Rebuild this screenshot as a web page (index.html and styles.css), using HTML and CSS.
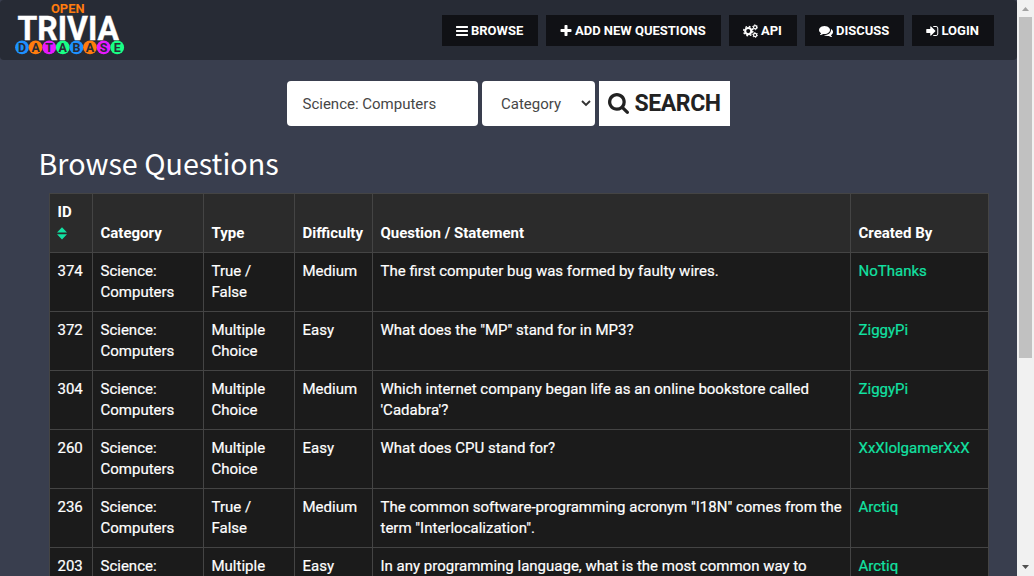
FILE: index.html
```html
<!DOCTYPE html>
<html lang="en">
<head>
<meta charset="utf-8">
<title>Open Trivia Database</title>
<link rel="stylesheet" href="styles.css">
</head>
<body>
<div class="page">
  <nav class="navbar">
    <a class="logo">
      <svg width="112" height="54" viewBox="14 2 112 54">
        <g class="logo-text">
          <text class="logo-open" x="51" y="13.4" textLength="33.500" lengthAdjust="spacingAndGlyphs">OPEN</text>
          <text class="logo-trivia" x="17.500" y="39.6" textLength="101.500" lengthAdjust="spacingAndGlyphs">TRIVIA</text>
        </g>
        <g>
          <circle cx="22" cy="47.4" r="6.900" fill="#1e90ff"/><circle cx="35.6" cy="47.4" r="6.900" fill="#ff7c0e"/>
          <circle cx="49.2" cy="47.4" r="6.900" fill="#e619ff"/><circle cx="62.8" cy="47.4" r="6.900" fill="#19ff84"/>
          <circle cx="76.4" cy="47.4" r="6.900" fill="#1e90ff"/><circle cx="90" cy="47.4" r="6.900" fill="#ff7c0e"/>
          <circle cx="103.6" cy="47.4" r="6.900" fill="#e619ff"/><circle cx="117.2" cy="47.4" r="6.900" fill="#19ff84"/>
        </g>
        <g class="logo-letters">
          <text x="22" y="51.9">D</text><text x="35.6" y="51.9">A</text><text x="49.2" y="51.9">T</text><text x="62.8" y="51.9">A</text>
          <text x="76.4" y="51.9">B</text><text x="90" y="51.9">A</text><text x="103.6" y="51.9">S</text><text x="117.2" y="51.9">E</text>
        </g>
      </svg>
    </a>
    <div class="menu">
      <a class="btn btn-browse"><svg class="icon" style="width:12px" viewBox="128 0 1536 1792"><path d="M1664 1344v128q0 26-19 45t-45 19h-1408q-26 0-45-19t-19-45v-128q0-26 19-45t45-19h1408q26 0 45 19t19 45zm0-512v128q0 26-19 45t-45 19h-1408q-26 0-45-19t-19-45v-128q0-26 19-45t45-19h1408q26 0 45 19t19 45zm0-512v128q0 26-19 45t-45 19h-1408q-26 0-45-19t-19-45v-128q0-26 19-45t45-19h1408q26 0 45 19t19 45z"/></svg><span>BROWSE</span></a>
      <a class="btn btn-add"><svg class="icon" style="width:12px" viewBox="192 0 1408 1792"><path d="M1600 736v192q0 40-28 68t-68 28h-416v416q0 40-28 68t-68 28h-192q-40 0-68-28t-28-68v-416h-416q-40 0-68-28t-28-68v-192q0-40 28-68t68-28h416v-416q0-40 28-68t68-28h192q40 0 68 28t28 68v416h416q40 0 68 28t28 68z"/></svg><span>ADD NEW QUESTIONS</span></a>
      <a class="btn btn-api"><svg class="icon" style="width:15px" viewBox="0 0 14 13"><g fill="none" stroke="#fff"><circle cx="4.9" cy="6.6" r="2.9" stroke-width="2"/><circle cx="4.9" cy="6.6" r="4.3" stroke-width="1.3" stroke-dasharray="1.7 1.677"/><circle cx="11.3" cy="3" r="1.5" stroke-width="1.1"/><circle cx="11.3" cy="3" r="2.3" stroke-width=".9" stroke-dasharray="1.2 1.209"/><circle cx="11.3" cy="10.2" r="1.5" stroke-width="1.1"/><circle cx="11.3" cy="10.2" r="2.3" stroke-width=".9" stroke-dasharray="1.2 1.209"/></g></svg><span>API</span></a>
      <a class="btn btn-discuss"><svg class="icon" style="width:14px" viewBox="0 0 1792 1792"><path d="M1408 768q0 139-94 257t-256.500 186.500-353.500 68.500q-86 0-176-16-124 88-278 128-36 9-86 16h-3q-11 0-20.500-8t-11.500-21q-1-3-1-6.500t.5-6.500 2-6l2.500-5 3.500-5.500 4-5 4.500-5 4-4.500q5-6 23-25t26-29.500 22.500-29 25-38.500 20.500-44q-124-72-195-177t-71-224q0-139 94-257t256.500-186.500 353.500-68.500 353.500 68.500 256.500 186.500 94 257zm384 256q0 120-71 224.500t-195 176.500q10 24 20.500 44t25 38.500 22.500 29 26 29.500 23 25q1 1 4 4.500t4.500 5 4 5 3.500 5.500l2.500 5 2 6 .5 6.500-1 6.500q-3 14-13 22t-22 7q-50-7-86-16-154-40-278-128-90 16-176 16-271 0-472-132 58 4 88 4 161 0 309-45t264-129q125-92 192-212t67-254q0-77-23-152 129 71 204 178t75 230z"/></svg><span>DISCUSS</span></a>
      <a class="btn btn-login"><svg class="icon" style="width:12.500px" viewBox="128 0 1536 1792"><path d="M1312 896q0 26-19 45l-544 544q-19 19-45 19t-45-19-19-45v-288h-448q-26 0-45-19t-19-45v-384q0-26 19-45t45-19h448v-288q0-26 19-45t45-19 45 19l544 544q19 19 19 45zm352-352v704q0 119-84.500 203.500t-203.500 84.500h-320q-13 0-22.500-9.500t-9.500-22.500q0-4-1-20t-.5-26.500 3-23.500 10-19.500 20.500-6.500h320q66 0 113-47t47-113v-704q0-66-47-113t-113-47h-312l-11.500-1-11.500-3-8-5.500-7-9-2-13.500q0-4-1-20t-.5-26.500 3-23.500 10-19.500 20.500-6.500h320q119 0 203.500 84.500t84.500 203.500z"/></svg><span>LOGIN</span></a>
    </div>
  </nav>

  <form class="search">
    <div class="field query"><span>Science: Computers</span></div>
    <div class="field kind"><span>Category</span><svg width="10" height="7" viewBox="0 0 10 7"><path d="M1 1l4 4 4-4" fill="none" stroke="#333" stroke-width="1.9"/></svg></div>
    <div class="submit"><svg class="submit-icon" viewBox="64 128 1664 1664"><path d="M1216 832q0-185-131.500-316.500t-316.500-131.500-316.500 131.500-131.500 316.500 131.500 316.500 316.500 131.500 316.500-131.500 131.500-316.500zm512 832q0 52-38 90t-90 38q-54 0-90-38l-343-342q-179 124-399 124-143 0-273.500-55.500t-225-150-150-225-55.500-273.500 55.500-273.500 150-225 225-150 273.500-55.500 273.500 55.500 225 150 150 225 55.500 273.500q0 220-124 399l343 343q37 37 37 90z"/></svg><span>SEARCH</span></div>
  </form>

  <h2 class="title">Browse Questions</h2>

  <table class="questions">
    <colgroup><col class="c-id"><col class="c-cat"><col class="c-type"><col class="c-diff"><col class="c-text"><col class="c-by"></colgroup>
    <thead>
      <tr><th>ID<br><svg class="sort" width="10" height="13" viewBox="0 0 10 13"><path d="M0 5.500L5 .3 10 5.500zM0 7.300h10L5 12.500z" fill="#12e2a3"/></svg></th><th>Category</th><th>Type</th><th>Difficulty</th><th>Question / Statement</th><th>Created By</th></tr>
    </thead>
    <tbody>
      <tr><td>374</td><td>Science: Computers</td><td>True / False</td><td>Medium</td><td>The first computer bug was formed by faulty wires.</td><td><a>NoThanks</a></td></tr>
      <tr><td>372</td><td>Science: Computers</td><td>Multiple Choice</td><td>Easy</td><td>What does the "MP" stand for in MP3?</td><td><a>ZiggyPi</a></td></tr>
      <tr><td>304</td><td>Science: Computers</td><td>Multiple Choice</td><td>Medium</td><td>Which internet company began life as an online bookstore called 'Cadabra'?</td><td><a>ZiggyPi</a></td></tr>
      <tr><td>260</td><td>Science: Computers</td><td>Multiple Choice</td><td>Easy</td><td>What does CPU stand for?</td><td><a>XxXlolgamerXxX</a></td></tr>
      <tr><td>236</td><td>Science: Computers</td><td>True / False</td><td>Medium</td><td>The common software-programming acronym "I18N" comes from the term "Interlocalization".</td><td><a>Arctiq</a></td></tr>
      <tr><td>203</td><td>Science:</td><td>Multiple</td><td>Easy</td><td>In any programming language, what is the most common way to</td><td><a>Arctiq</a></td></tr>
    </tbody>
  </table>
</div>
<div class="scrollbar">
  <svg width="17" height="17" viewBox="0 0 17 17"><path d="M5 11h7L8.500 7z" fill="#a3a3a3"/></svg>
  <div class="track"><div class="thumb"></div></div>
  <svg width="17" height="17" viewBox="0 0 17 17"><path d="M5 6h7l-3.500 4z" fill="#505050"/></svg>
</div>
</body>
</html>
```
FILE: styles.css
```css
* { box-sizing: border-box; }
body {
  margin: 0;
  height: 576px;
  display: flex;
  overflow: hidden;
  background: #393e4e;
  color: #fff;
  font: 400 15px/21px Roboto, "Liberation Sans", sans-serif;
}
.page { width: 1017px; height: 576px; overflow: hidden; flex: none; }

.navbar {
  height: 60px;
  padding: 0 23px 0 14px;
  display: flex;
  justify-content: space-between;
  background: #272b35;
  border-radius: 4px;
}
.logo { padding-top: 2px; line-height: 0; }
.logo text { font-family: Roboto, sans-serif; font-weight: 700; }
.logo-open { font-size: 12.800px; fill: #ff7c0e; }
.logo-trivia { font-size: 33.500px; fill: #fff; stroke: #fff; stroke-width: .4px; }
.logo-letters text { font-size: 12.500px; fill: #272b35; text-anchor: middle; }

.menu { display: flex; gap: 8px; padding-top: 15px; }
.btn {
  height: 31px;
  padding-left: 14px;
  display: flex;
  align-items: center;
  gap: 3px;
  background: #101115;
  font-size: 13px;
  font-weight: 700;
  white-space: nowrap;
}
.btn-browse { width: 96px; }
.btn-add { width: 175px; }
.btn-api { width: 68px; }
.btn-discuss { width: 99px; }
.btn-login { width: 82px; }
.icon { height: 14px; fill: #fff; flex: none; }

.search { display: flex; gap: 4px; margin: 21px 0 0 287px; height: 45px; }
.field {
  display: flex;
  align-items: center;
  background: #fff;
  color: #464646;
  border-radius: 4px;
}
.field span { padding-top: 2px; }
.query { width: 191px; padding-left: 15.500px; }
.kind { width: 113px; padding: 0 4px 0 19px; justify-content: space-between; }
.submit {
  width: 131px;
  padding-left: 9px;
  display: flex;
  align-items: center;
  gap: 5.500px;
  background: #fff;
  color: #222;
  font-size: 23px;
  font-weight: 700;
  letter-spacing: -.4px;
}
.submit-icon { width: 21px; height: 21px; fill: #222; }

.title {
  margin: 17px 0 10px 38.500px;
  height: 40px;
  font: 400 28.700px/40px "Noto Sans CJK SC", sans-serif;
}

.questions {
  width: 940px;
  margin-left: 49px;
  table-layout: fixed;
  border-collapse: collapse;
  background: #1b1b1b;
}
.questions th, .questions td {
  padding: 8px 7px 8px 7.500px;
  border: 1px solid #444;
  text-align: left;
  vertical-align: top;
}
.questions td { height: 59px; -webkit-text-stroke: .2px; }
.questions th { vertical-align: bottom; font-weight: 700; background: #2b2b2b; }
.questions a { color: #12e2a3; }
.sort { display: inline-block; vertical-align: -2px; margin-left: -1px; }
.c-id { width: 43px; }
.c-cat { width: 111px; }
.c-type { width: 91px; }
.c-diff { width: 78px; }
.c-text { width: 478px; }
.c-by { width: 138px; }

.scrollbar {
  width: 17px;
  height: 576px;
  flex: none;
  display: flex;
  flex-direction: column;
  background: #f1f1f1;
}
.scrollbar svg { flex: none; }
.track { flex: 1; padding: 0 2px; }
.thumb { height: 341px; background: #c1c1c1; }
```
